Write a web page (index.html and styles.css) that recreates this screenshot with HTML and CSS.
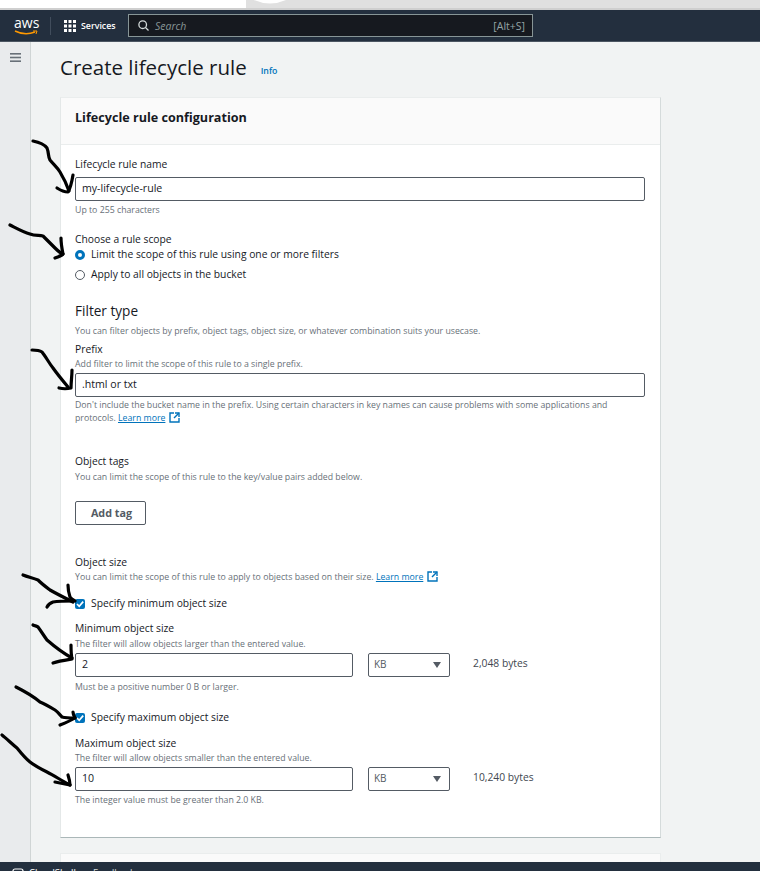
FILE: index.html
```html
<!DOCTYPE html>
<html>
<head>
<meta charset="utf-8">
<title>Create lifecycle rule</title>
<link rel="stylesheet" href="styles.css">
</head>
<body>
<div class="browser-strip">
  <svg width="760" height="8" viewBox="0 0 760 8">
    <rect x="246" width="514" height="8" fill="#e0e0e0"/>
    <path d="M254 0 Q270 7 286 0 Z" fill="#fff"/>
  </svg>
</div>
<header class="topnav">
  <div class="logo">
    <span class="logo-text">aws</span>
    <svg class="smile" width="24" height="6" viewBox="0 0 24 6"><path d="M1 1 Q11 6 21 2" fill="none" stroke="#f90" stroke-width="1.4"/><path d="M19 1 L23 1 L22 4" fill="none" stroke="#f90" stroke-width="1"/></svg>
  </div>
  <div class="nav-sep"></div>
  <svg class="grid-icon" width="12" height="12" viewBox="0 0 12 12" fill="#fff">
    <rect width="3" height="3"/><rect x="4.5" width="3" height="3"/><rect x="9" width="3" height="3"/>
    <rect y="4.5" width="3" height="3"/><rect x="4.5" y="4.5" width="3" height="3"/><rect x="9" y="4.5" width="3" height="3"/>
    <rect y="9" width="3" height="3"/><rect x="4.5" y="9" width="3" height="3"/><rect x="9" y="9" width="3" height="3"/>
  </svg>
  <span class="services">Services</span>
  <div class="searchbox">
    <svg width="11" height="11" viewBox="0 0 11 11" fill="none" stroke="#d5dbdb" stroke-width="1.3"><circle cx="4.7" cy="4.7" r="3.8"/><path d="M7.5 7.5 L10.5 10.5"/></svg>
    <span class="search-text">Search</span>
    <span class="search-key">[Alt+S]</span>
  </div>
</header>

<div class="shell">
  <aside class="sidebar">
    <svg class="menu-icon" width="11" height="9" viewBox="0 0 11 9" fill="#687078"><rect width="11" height="1.6"/><rect y="3.7" width="11" height="1.6"/><rect y="7.4" width="11" height="1.6"/></svg>
  </aside>
  <main class="content">
    <div class="title-row">
      <h1>Create lifecycle rule</h1>
      <a class="info-link">Info</a>
    </div>

    <section class="card">
      <div class="card-head">Lifecycle rule configuration</div>
      <div class="card-body">
        <div class="label">Lifecycle rule name</div>
        <div class="input input-name">my-lifecycle-rule</div>
        <div class="hint hint-name">Up to 255 characters</div>

        <div class="label label-scope">Choose a rule scope</div>
        <div class="choice"><span class="radio radio-on"></span>Limit the scope of this rule using one or more filters</div>
        <div class="choice choice-second"><span class="radio"></span>Apply to all objects in the bucket</div>

        <h2>Filter type</h2>
        <div class="hint hint-filter">You can filter objects by prefix, object tags, object size, or whatever combination suits your usecase.</div>
        <div class="label label-prefix">Prefix</div>
        <div class="hint hint-field">Add filter to limit the scope of this rule to a single prefix.</div>
        <div class="input">.html or txt</div>
        <div class="hint hint-long">Don't include the bucket name in the prefix. Using certain characters in key names can cause problems with some applications and protocols. <a class="ext-link">Learn more</a>
          <svg class="ext-icon" width="11" height="11" viewBox="0 0 11 11" fill="none" stroke="#0073bb" stroke-width="1.4"><path d="M5 1 H1 V10 H10 V6"/><path d="M6 1 H10 V5"/><path d="M10 1 L5 6"/></svg>
        </div>

        <div class="label label-tags">Object tags</div>
        <div class="hint hint-tags">You can limit the scope of this rule to the key/value pairs added below.</div>
        <div class="add-tag">Add tag</div>

        <div class="label label-size">Object size</div>
        <div class="hint hint-sizeinfo">You can limit the scope of this rule to apply to objects based on their size. <a class="ext-link">Learn more</a>
          <svg class="ext-icon" width="11" height="11" viewBox="0 0 11 11" fill="none" stroke="#0073bb" stroke-width="1.4"><path d="M5 1 H1 V10 H10 V6"/><path d="M6 1 H10 V5"/><path d="M10 1 L5 6"/></svg>
        </div>

        <div class="choice choice-min"><span class="check"><svg width="10" height="10" viewBox="0 0 10 10" fill="none" stroke="#fff" stroke-width="1.7"><path d="M2 5 L4.2 7.3 L8.2 2.6"/></svg></span>Specify minimum object size</div>
        <div class="label label-min">Minimum object size</div>
        <div class="hint hint-min">The filter will allow objects larger than the entered value.</div>
        <div class="size-row">
          <div class="input input-size">2</div>
          <div class="unit">KB<span class="caret"></span></div>
          <div class="bytes">2,048 bytes</div>
        </div>
        <div class="hint hint-minsize">Must be a positive number 0 B or larger.</div>

        <div class="choice choice-max"><span class="check"><svg width="10" height="10" viewBox="0 0 10 10" fill="none" stroke="#fff" stroke-width="1.7"><path d="M2 5 L4.2 7.3 L8.2 2.6"/></svg></span>Specify maximum object size</div>
        <div class="label label-max">Maximum object size</div>
        <div class="hint hint-field">The filter will allow objects smaller than the entered value.</div>
        <div class="size-row">
          <div class="input input-size">10</div>
          <div class="unit">KB<span class="caret"></span></div>
          <div class="bytes">10,240 bytes</div>
        </div>
        <div class="hint hint-maxsize">The integer value must be greater than 2.0 KB.</div>
      </div>
    </section>
    <section class="card-next"></section>
  </main>
</div>

<footer class="bottombar">
  <svg class="shell-icon" width="12" height="12" viewBox="0 0 12 12" fill="none" stroke="#fff" stroke-width="1.2"><rect x="1" y="1" width="10" height="10" rx="2"/></svg>
  <span class="bottom-text">CloudShell</span>
  <span class="bottom-text bottom-second">Feedback</span>
</footer>

<!-- hand drawn arrows from the screenshot -->
<svg class="scribbles" width="760" height="871" viewBox="0 0 760 871" fill="none" stroke="#000" stroke-width="3.2" stroke-linecap="round" stroke-linejoin="round">
  <path d="M33 141 C38 142 44 144 47 148 C49 153 48 157 50 160 C54 165 57 167 60 172 C63 177 66 182 69 191"/>
  <path d="M73 175 C72 181 71 187 68 192 C64 192 60 190 57 188"/>
  <path d="M10 225 C16 228 23 232 30 234 C35 236 39 235 43 236 C47 240 51 244 55 248 C58 251 60 253 63 254"/>
  <path d="M61 238 C61 244 62 249 63 254 C61 256 58 257 55 258"/>
  <path d="M32 350 C36 350 39 350 42 352 C46 357 49 363 53 368 C58 375 63 381 68 387"/>
  <path d="M72 370 C72 376 71 382 71 388 C67 389 63 389 59 388"/>
  <path d="M23 575 C28 577 33 578 38 580 C42 584 46 587 50 590 C57 594 65 598 73 602"/>
  <path d="M68 585 C68 590 69 594 70 597 C71 599 73 600 75 601 C68 601 59 601 53 602 C50 603 48 605 47 607"/>
  <path d="M33 625 C35 626 37 626 38 627 C41 631 44 636 47 640 C55 647 63 653 72 658"/>
  <path d="M71 645 C71 650 71 654 72 659 C66 660 59 661 53 663"/>
  <path d="M16 687 C24 691 33 696 40 702 C45 704 50 707 55 710 C58 712 60 715 62 717 C66 718 71 718 75 718"/>
  <path d="M73 712 C73 714 74 716 75 718 C70 721 65 723 60 725"/>
  <path d="M2 735 C7 739 12 744 17 748 C21 753 25 758 30 762 C35 766 41 769 47 772 C55 776 62 781 70 785"/>
  <path d="M55 782 C60 783 65 784 70 785 C70 782 69 778 68 775"/>
</svg>
</body>
</html>
```
FILE: styles.css
```css
* {
  box-sizing: border-box;
}
html,
body {
  margin: 0;
  height: 871px;
  overflow: hidden;
}
body {
  font-family: "Open Sans", sans-serif;
  color: #16191f;
  background: #f1f3f3;
  display: flex;
  flex-direction: column;
}
.browser-strip {
  height: 10px;
  background: #fff;
  border-bottom: 2px solid #cfcfcf;
  overflow: hidden;
  flex: none;
}
.browser-strip svg {
  display: block;
}
.topnav {
  height: 32px;
  flex: none;
  background: #232f3e;
  border-bottom: 1px solid #4c5662;
  display: flex;
  align-items: center;
  padding-left: 14px;
}
.logo {
  width: 24px;
  height: 24px;
}
.logo-text {
  color: #fff;
  font-size: 14px;
  line-height: 17px;
  display: block;
  text-align: center;
}
.smile {
  display: block;
  margin-top: -1px;
}
.nav-sep {
  width: 1px;
  height: 18px;
  background: #414d5c;
  margin: 0 13px 0 12px;
}
.grid-icon {
  flex: none;
}
.services {
  color: #fff;
  font-size: 8.8px;
  font-weight: 600;
  margin: 0 13px 0 5px;
  width: 34px;
  white-space: nowrap;
}
.searchbox {
  width: 405px;
  height: 23px;
  background: #16191f;
  border: 1px solid #879596;
  display: flex;
  align-items: center;
  padding: 0 7px 0 9px;
  font-size: 10.5px;
}
.search-text {
  color: #879596;
  font-style: italic;
  margin-left: 6px;
  flex: 1;
}
.search-key {
  color: #95a5a6;
}
.shell {
  flex: 1;
  display: flex;
  min-height: 0;
  overflow: hidden;
}
.sidebar {
  width: 31px;
  flex: none;
  background: #e9ebed;
  border-right: 1px solid #d0d5d5;
  padding: 11px 0 0 10px;
}
.menu-icon {
  display: block;
}
.content {
  width: 601px;
  margin-left: 29px;
}
.title-row {
  height: 55px;
  display: flex;
  align-items: center;
  padding-bottom: 6px;
}
h1 {
  margin: 0;
  font-size: 20.5px;
  font-weight: 400;
  line-height: 28px;
}
.info-link {
  color: #0073bb;
  font-size: 8.8px;
  font-weight: 600;
  margin: 8px 0 0 14px;
}
.card {
  background: #fff;
  height: 741px;
  border-top: 1px solid #eaeded;
  border-right: 1px solid #d5dbdb;
  border-bottom: 1px solid #aab7b8;
  border-left: 1px solid #e4e8e8;
}
.card-head {
  height: 47px;
  background: #fafafa;
  border-bottom: 1px solid #eaeded;
  padding: 11px 14px 0;
  font-size: 12.6px;
  font-weight: 700;
  line-height: 18px;
}
.card-body {
  padding: 12px 14px 0;
}
.label {
  font-size: 10.3px;
  line-height: 15px;
}
.hint {
  color: #687078;
  font-size: 8.75px;
  line-height: 12px;
}
.input {
  height: 24px;
  width: 570px;
  border: 1px solid #545b64;
  border-radius: 2px;
  padding-left: 6px;
  font-size: 10.6px;
  line-height: 21px;
  background: #fff;
}
.input-name {
  margin-top: 5px;
}
.hint-name {
  margin-top: 3px;
}
.label-scope {
  margin-top: 16px;
}
.choice {
  display: flex;
  align-items: center;
  font-size: 10.3px;
  line-height: 15px;
}
.choice-second {
  margin-top: 5px;
}
.radio {
  width: 10px;
  height: 10px;
  border: 1px solid #545b64;
  border-radius: 50%;
  margin-right: 6px;
  flex: none;
  background: #fff;
}
.radio-on {
  border: 3px solid #0073bb;
}
h2 {
  margin: 19px 0 0;
  font-size: 13.6px;
  font-weight: 400;
  line-height: 20px;
}
.hint-filter {
  margin-top: 4px;
}
.label-prefix {
  margin-top: 5px;
}
.hint-field {
  margin-top: 1px;
  margin-bottom: 3px;
}
.hint-long {
  margin-top: 2px;
  width: 550px;
  line-height: 13px;
}
.ext-link {
  color: #0073bb;
  text-decoration: underline;
}
.ext-icon {
  vertical-align: -2px;
  margin-left: 1px;
}
.label-tags {
  margin-top: 29px;
}
.hint-tags {
  margin-top: 2px;
}
.add-tag {
  width: 71px;
  height: 24px;
  margin-top: 18px;
  border: 1px solid #545b64;
  border-radius: 2px;
  color: #545b64;
  font-size: 10.8px;
  font-weight: 700;
  line-height: 21px;
  padding-left: 2px;
  text-align: center;
}
.label-size {
  margin-top: 30px;
}
.hint-sizeinfo {
  margin-top: 1px;
}
.check {
  width: 10px;
  height: 10px;
  border-radius: 2px;
  background: #0073bb;
  margin-right: 6px;
  flex: none;
  display: flex;
}
.choice-min {
  margin-top: 13px;
}
.label-min {
  margin-top: 10px;
}
.hint-min {
  margin-top: 2px;
  margin-bottom: 3px;
}
.size-row {
  display: flex;
  align-items: flex-start;
}
.input-size {
  width: 278px;
  flex: none;
}
.unit {
  width: 82px;
  height: 24px;
  margin-left: 15px;
  border: 1px solid #545b64;
  border-radius: 2px;
  padding-left: 5px;
  font-size: 10px;
  line-height: 21px;
  color: #545b64;
  position: relative;
  flex: none;
}
.caret {
  position: absolute;
  right: 8px;
  top: 8px;
  width: 0;
  height: 0;
  border-left: 4px solid transparent;
  border-right: 4px solid transparent;
  border-top: 6px solid #545b64;
}
.bytes {
  margin-left: 23px;
  font-size: 10.3px;
  line-height: 20px;
  color: #414750;
}
.hint-minsize {
  margin-top: 4px;
}
.choice-max {
  margin-top: 17px;
}
.label-max {
  margin-top: 11px;
}
.hint-maxsize {
  margin-top: 3px;
}
.card-next {
  margin-top: 15px;
  height: 30px;
  background: #fafafa;
  border: 1px solid #eaeded;
}
.bottombar {
  height: 9px;
  flex: none;
  overflow: hidden;
  background: #232f3e;
  color: #fff;
  display: flex;
  align-items: flex-start;
  padding: 4px 0 0 12px;
  font-size: 9.5px;
  line-height: 14px;
}
.shell-icon {
  flex: none;
  margin-top: 2px;
}
.bottom-text {
  margin-left: 5px;
}
.bottom-second {
  margin-left: 17px;
  color: #d5dbdb;
}
.scribbles {
  position: absolute;
  left: 0;
  top: 0;
  pointer-events: none;
}
```
